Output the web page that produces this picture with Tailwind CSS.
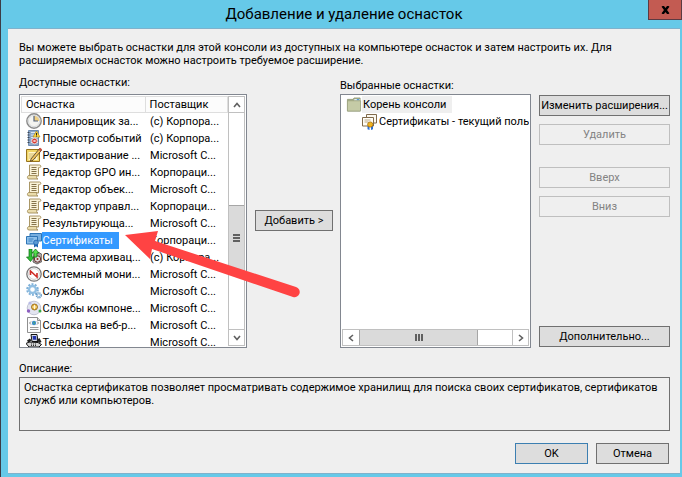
<!DOCTYPE html>
<html lang="ru">
<head>
    <meta charset="utf-8" />
    <meta name="viewport" content="width=device-width, initial-scale=1.0" />
    <title>Добавление и удаление оснасток</title>
    <script src="https://cdn.jsdelivr.net/npm/@tailwindcss/browser@4"></script>
</head>
<body class="h-screen overflow-hidden bg-[#66c9e8] font-[Roboto,sans-serif] text-[11px] leading-[13px] text-black">
    <!-- Icons -->
    <svg class="hidden">
        <symbol id="clock" viewBox="0 0 16 16">
            <circle cx="8" cy="8" r="7.2" fill="#f4f4f0" stroke="#8b8b8b" stroke-width="1.4" />
            <path d="M8 8V2.4A5.6 5.6 0 0 1 13.6 8z" fill="#f0cf82" />
            <path d="M8 3v5h4" fill="none" stroke="#52627c" stroke-width="1.2" />
            <circle cx="8" cy="8" r="5.6" fill="none" stroke="#cfd3d8" stroke-width=".8" />
        </symbol>
        <symbol id="events" viewBox="0 0 16 16">
            <path d="M2.500.5h10v15h-10z" fill="#8ea9c8" stroke="#6f8bb0" />
            <path d="M5 2.500h7M5 5h7M5 7.500h7M5 10h7M5 12.500h7" stroke="#dbe6f2" />
            <path d="M1.500 2.500h2M1.500 5h2M1.500 7.500h2M1.500 10h2M1.500 12.500h2" stroke="#3c4654" />
            <path d="M10.500 1l3.500 6H7z" fill="#ffd83c" stroke="#b58d14" stroke-width=".7" />
            <path d="M10.500 3v2M10.500 5.500v1" stroke="#222" />
            <circle cx="8.500" cy="11" r="2.800" fill="#d73a32" stroke="#fff" stroke-width=".6" />
            <path d="M7.500 10l2 2M9.500 10l-2 2" stroke="#fff" stroke-width=".9" />
        </symbol>
        <symbol id="edit" viewBox="0 0 16 16">
            <path d="M.5 2.500h13v12H.5z" fill="#f1d667" stroke="#98741e" />
            <path d="M2.500 5h9v8h-9z" fill="#fff7cd" />
            <path d="M3 7h6M3 9h5M3 11h7" stroke="#c9a844" stroke-width=".8" />
            <path d="M5 12l8.500-10.500 2 1.800L7 13.300l-2.600.9z" fill="#f0c560" stroke="#4b3a21" stroke-width=".8" />
            <path d="M12.600 2.600l1.500-1.900 2 1.700-1.600 2z" fill="#c8493c" />
        </symbol>
        <symbol id="scroll" viewBox="0 0 16 16">
            <path d="M3.500 1h10c1.800 0 1.800 2.600 0 2.600h-1V12h-9z" fill="#faf3d8" stroke="#a08b58" stroke-width=".9" />
            <path d="M2.500 11.500H11c-.8 1.200-.4 3.500 1 3.500H3c-2 0-2-2.600-.5-3.500z" fill="#eadcab" stroke="#a08b58" stroke-width=".9" />
            <path d="M5.500 3.500h5M5.500 5.500h5M5.500 7.500h5M5.500 9.500h5" stroke="#85734a" />
        </symbol>
        <symbol id="certs-blue" viewBox="0 0 16 16">
            <path d="M4 1.500h11.500V9H4z" fill="#78afe0" stroke="#2e74b5" />
            <path d="M.5 4.500h11V12H.5z" fill="#8dc0eb" stroke="#2e74b5" />
            <path d="M2.500 7h5M2.500 9h4" stroke="#3d82c2" />
            <path d="M8 11.500h4v4l-2-1.300-2 1.300z" fill="#1f65b0" />
            <circle cx="10" cy="10.500" r="2.400" fill="#5b9ad3" stroke="#1f65b0" stroke-width=".8" />
        </symbol>
        <symbol id="certs" viewBox="0 0 16 16">
            <path d="M4.500.5h10V9h-10z" fill="#fbf8f0" stroke="#806a4a" />
            <path d="M.5 3.500h11V12H.5z" fill="#fffdf6" stroke="#806a4a" />
            <path d="M2.500 6h6M2.500 8h4" stroke="#b9a98b" />
            <path d="M5.500 12h2v4l-2-.8zM9 12h2v3.200l-2 .8z" fill="#2c6fd1" />
            <circle cx="8.200" cy="10.500" r="2.600" fill="#f0b41f" stroke="#a66d0c" stroke-width=".8" />
        </symbol>
        <symbol id="backup" viewBox="0 0 16 16">
            <path d="M8 5l5-1.500 3 2v7L11 15l-4-2z" fill="#aaa6a4" stroke="#4e4a4a" stroke-width=".8" />
            <circle cx="11.500" cy="10" r="3.200" fill="#dfdcdc" stroke="#6b2f2f" />
            <circle cx="11.500" cy="10" r="1" fill="#8e2626" />
            <path d="M3 0h3v8h2L4.500 12.500.5 8H3z" fill="#2fbf35" stroke="#0c6b13" stroke-width=".7" />
            <path d="M9.500 0l3.500 4h-2v4H8V4H6z" fill="#55dc4d" stroke="#0c6b13" stroke-width=".7" />
        </symbol>
        <symbol id="perf" viewBox="0 0 16 16">
            <circle cx="8" cy="8" r="7.200" fill="#fff" stroke="#777" stroke-width="1.300" />
            <circle cx="8" cy="8" r="5.400" fill="#fff" stroke="#bbb" stroke-width=".7" />
            <path d="M4.500 9V5l6.500 6V7" fill="none" stroke="#cf2c27" stroke-width="1.600" />
        </symbol>
        <symbol id="gears" viewBox="0 0 16 16">
            <circle cx="6.500" cy="6.500" r="5.300" fill="none" stroke="#7fb0d8" stroke-width="2" stroke-dasharray="2 1.330" />
            <circle cx="6.500" cy="6.500" r="3.500" fill="#fff" stroke="#91bfe2" stroke-width="2.400" />
            <circle cx="12.800" cy="12.300" r="2.500" fill="none" stroke="#6d9fc8" stroke-width="1.400" stroke-dasharray="1.300 .7" />
            <circle cx="12.800" cy="12.300" r="1.500" fill="#fff" stroke="#83b2d8" />
        </symbol>
        <symbol id="components" viewBox="0 0 16 16">
            <circle cx="8" cy="8" r="6.800" fill="#e2e4f0" stroke="#b6b9ca" stroke-width=".8" />
            <circle cx="8.500" cy="7" r="3" fill="#e9b53f" stroke="#8e6315" stroke-width=".8" />
            <path d="M8.500 5v4M6.500 7h4" stroke="#fff7d5" />
            <circle cx="4" cy="3" r="1.600" fill="#b9bce6" />
            <circle cx="2.500" cy="11" r="1.700" fill="#8d5fc0" />
            <circle cx="14" cy="11" r="1.500" fill="#39a845" />
        </symbol>
        <symbol id="weblink" viewBox="0 0 16 16">
            <path d="M1.500.5h10l3 3v12h-13z" fill="#fcfcfc" stroke="#8f8f8f" />
            <path d="M11.500.5v3h3" fill="#ddd" stroke="#8f8f8f" />
            <circle cx="8" cy="6" r="2.200" fill="#3f8fcf" />
            <path d="M7.500 4.500l1.500 1-1 2z" fill="#4aab50" />
            <path d="M5 4.500L3.500 6 5 7.500M11 4.500L12.500 6 11 7.500" fill="none" stroke="#666" stroke-width=".8" />
            <path d="M4 10.500h8.500M4 12.500h8.500" stroke="#9a9a9a" />
        </symbol>
        <symbol id="phone" viewBox="0 0 16 16">
            <path d="M5 .500h6l1 7H6z" fill="#d7dbe6" stroke="#111" />
            <path d="M6.500 2h3.500l.5 3.700H7z" fill="#2233a8" />
            <path d="M0 9.500L3 8l9 .5 3.500 2L13 13H3z" fill="#d5d5d5" stroke="#111" />
            <path d="M1 6.500l3-2 1.500 2-3 2.500zM10.500 6l3-2 2 4-2 1z" fill="#222" />
            <path d="M5 10h6M5 11.500h6" stroke="#333" stroke-dasharray="1 1" />
        </symbol>
        <symbol id="folder" viewBox="0 0 16 16">
            <path d="M1 2.500h6l1-1.500h6.500v14H1z" fill="#a9b28a" stroke="#8c9474" stroke-width=".8" />
            <path d="M8.500 2h5.500v2H8z" fill="#dfeaf3" />
            <path d="M11 2.300h2.500v1.200H11z" fill="#3f92d6" />
            <path d="M1 4h14v11H1z" fill="#c5cba6" stroke="#99a27d" stroke-width=".8" />
        </symbol>
    </svg>

    <div class="relative flex h-full flex-col border-l border-[#3c3c46] pb-[3px] pl-[7px] pr-[2px]">
        <!-- Title bar -->
        <header class="flex h-7 shrink-0 items-center justify-center">
            <h1 class="text-[15px] leading-5">Добавление и удаление оснасток</h1>
            <button aria-label="Закрыть" class="absolute right-0 top-0 flex h-5 w-[34px] items-center justify-center border border-t-0 border-[#5c3a42] bg-[#c35b52]">
                <svg class="h-2 w-[9px]" viewBox="0 0 9 8"><path d="M1.500 0L7.500 8M7.500 0L1.500 8" stroke="#000" stroke-width="2.400" /></svg>
            </button>
        </header>

        <div class="flex min-h-0 flex-1 flex-col border-y border-[#7fb2cc] bg-[#efefef] pb-[9px] pl-[11px] pr-[10px] pt-3">
            <p class="mb-[9px]">Вы можете выбрать оснастки для этой консоли из доступных на компьютере оснасток и затем настроить их. Для расширяемых оснасток можно настроить требуемое расширение.</p>

            <main class="flex min-h-0 flex-1">
                <!-- Available snap-ins -->
                <section class="flex min-w-0 flex-[228] flex-col">
                    <h2 class="mb-[5px]">Доступные оснастки:</h2>
                    <div class="flex min-h-0 flex-1 border border-[#828790] bg-white px-px pt-px">
                        <div class="min-w-0 flex-1 overflow-hidden">
                            <table class="w-full table-fixed text-left whitespace-nowrap">
                                <thead>
                                    <tr class="h-4">
                                        <th class="w-3/5 border border-[#dedede] bg-[#fcfcfc] pl-1 font-normal">Оснастка</th>
                                        <th class="border border-[#dedede] bg-[#fcfcfc] pl-1 font-normal">Поставщик</th>
                                    </tr>
                                </thead>
                                <tbody id="snapins"></tbody>
                            </table>
                        </div>
                        <div class="mb-px flex w-[17px] shrink-0 flex-col border border-[#c0c0c0]">
                            <button aria-label="Вверх по списку" class="flex h-4 items-center justify-center border-b border-[#c0c0c0]">
                                <svg class="h-[6px] w-2" viewBox="0 0 8 6"><path d="M1 5l3-3.500L7 5" fill="none" stroke="#606060" stroke-width="1.600" /></svg>
                            </button>
                            <div class="flex-[93]"></div>
                            <div class="flex flex-[66] flex-col items-center justify-center gap-px border-y border-[#a6a6a6] bg-[#dadada]">
                                <i class="h-0.5 w-[7px] bg-[#606060]"></i>
                                <i class="h-0.5 w-[7px] bg-[#606060]"></i>
                                <i class="h-0.5 w-[7px] bg-[#606060]"></i>
                            </div>
                            <div class="flex-[58]"></div>
                            <button aria-label="Вниз по списку" class="flex h-4 items-center justify-center border-t border-[#c0c0c0]">
                                <svg class="h-[6px] w-2" viewBox="0 0 8 6"><path d="M1 1l3 3.500L7 1" fill="none" stroke="#606060" stroke-width="1.600" /></svg>
                            </button>
                        </div>
                    </div>
                </section>

                <div class="flex shrink-0 items-center pl-2 pr-[7px] pt-[17px]">
                    <button class="h-[21px] w-[78px] border border-[#707070] bg-[#dddddd]">Добавить &gt;</button>
                </div>

                <!-- Selected snap-ins -->
                <section class="flex min-w-0 flex-[191] flex-col pt-[3px]">
                    <h2 class="mb-0.5">Выбранные оснастки:</h2>
                    <div class="flex min-h-0 flex-1 flex-col border border-[#828790] bg-white p-px">
                        <ul class="min-h-0 flex-1 overflow-hidden whitespace-nowrap">
                            <li class="flex h-[17px] items-center pl-1"><svg class="h-[15px] w-4 shrink-0"><use href="#folder" /></svg><span class="bg-[#efefef] py-0.5 pl-px pr-1.5">Корень консоли</span></li>
                            <li class="flex h-[17px] items-center pl-5"><svg class="h-4 w-4 shrink-0"><use href="#certs" /></svg><span class="pl-px">Сертификаты - текущий поль</span></li>
                        </ul>
                        <div class="flex h-[17px] shrink-0 border border-[#c0c0c0]">
                            <button aria-label="Влево" class="flex w-4 items-center justify-center">
                                <svg class="h-2 w-[6px]" viewBox="0 0 6 8"><path d="M5 1L1.500 4L5 7" fill="none" stroke="#606060" stroke-width="1.600" /></svg>
                            </button>
                            <div class="flex flex-[119] items-center justify-center gap-px border-x border-[#a6a6a6] bg-[#dadada]">
                                <i class="h-[7px] w-0.5 bg-[#606060]"></i>
                                <i class="h-[7px] w-0.5 bg-[#606060]"></i>
                                <i class="h-[7px] w-0.5 bg-[#606060]"></i>
                            </div>
                            <div class="flex-[34]"></div>
                            <button aria-label="Вправо" class="flex w-4 items-center justify-center border-l border-[#c0c0c0]">
                                <svg class="h-2 w-[6px]" viewBox="0 0 6 8"><path d="M1 1l3.500 3L1 7" fill="none" stroke="#606060" stroke-width="1.600" /></svg>
                            </button>
                        </div>
                    </div>
                </section>

                <div class="ml-2 flex w-[131px] shrink-0 flex-col gap-2 pt-[19px] *:h-[21px] *:shrink-0 *:border *:whitespace-nowrap">
                    <button class="border-[#707070] bg-[#dddddd]">Изменить расширения...</button>
                    <button disabled class="border-[#bfbfbf] text-[#838383]">Удалить</button>
                    <button disabled class="mt-3.5 border-[#bfbfbf] text-[#838383]">Вверх</button>
                    <button disabled class="border-[#bfbfbf] text-[#838383]">Вниз</button>
                    <button class="mt-auto mb-px border-[#707070] bg-[#dddddd]">Дополнительно...</button>
                </div>
            </main>

            <section class="mt-3.5">
                <h2 class="mb-0.5">Описание:</h2>
                <p class="h-[54px] border border-[#707070] py-[3px] pl-1">Оснастка сертификатов позволяет просматривать содержимое хранилищ для поиска своих сертификатов, сертификатов служб или компьютеров.</p>
            </section>

            <footer class="mt-3 flex justify-end gap-2 pr-px">
                <button class="h-[21px] w-[73px] border border-[#3c7fb1] bg-[#dddddd]">OK</button>
                <button class="h-[21px] w-[73px] border border-[#707070] bg-[#dddddd]">Отмена</button>
            </footer>
        </div>

        <!-- Pointer arrow over the selected row -->
        <svg class="pointer-events-none absolute left-[123px] top-[228px] h-[72px] w-[180px]" viewBox="125 228 180 72">
            <path d="M126 235l33-4-3 10 141 46a5 5 0 0 1-3 10l-141-48-2 10z" fill="#ff4343" />
        </svg>
    </div>

    <script>
        const snapins = [
            ['clock', 'Планировщик за...', '(c) Корпора...'],
            ['events', 'Просмотр событий', '(c) Корпора...'],
            ['edit', 'Редактирование ...', 'Microsoft C...'],
            ['scroll', 'Редактор GPO ин...', 'Корпораци...'],
            ['scroll', 'Редактор объек...', 'Microsoft C...'],
            ['scroll', 'Редактор управл...', 'Корпораци...'],
            ['scroll', 'Результирующа...', 'Microsoft C...'],
            ['certs-blue', 'Сертификаты', 'Корпораци...'],
            ['backup', 'Система архивац...', '(c) Корпора...'],
            ['perf', 'Системный мони...', 'Microsoft C...'],
            ['gears', 'Службы', 'Microsoft C...'],
            ['components', 'Службы компоне...', 'Microsoft C...'],
            ['weblink', 'Ссылка на веб-р...', 'Microsoft C...'],
            ['phone', 'Телефония', 'Microsoft C...']
        ];
        const selected = 'certs-blue';

        document.getElementById('snapins').innerHTML = snapins.map(([icon, name, vendor]) => `
            <tr class="h-[17px]">
                <td class="pl-1"><div class="flex items-center">
                    <svg class="h-4 w-4 shrink-0"><use href="#${icon}" /></svg>
                    <span class="${icon === selected ? 'bg-[#3399ff] py-0.5 pl-px pr-1.5 text-white' : 'px-px'}">${name}</span>
                </div></td>
                <td class="pl-[5px]">${vendor}</td>
            </tr>`).join('');
    </script>
</body>
</html>
